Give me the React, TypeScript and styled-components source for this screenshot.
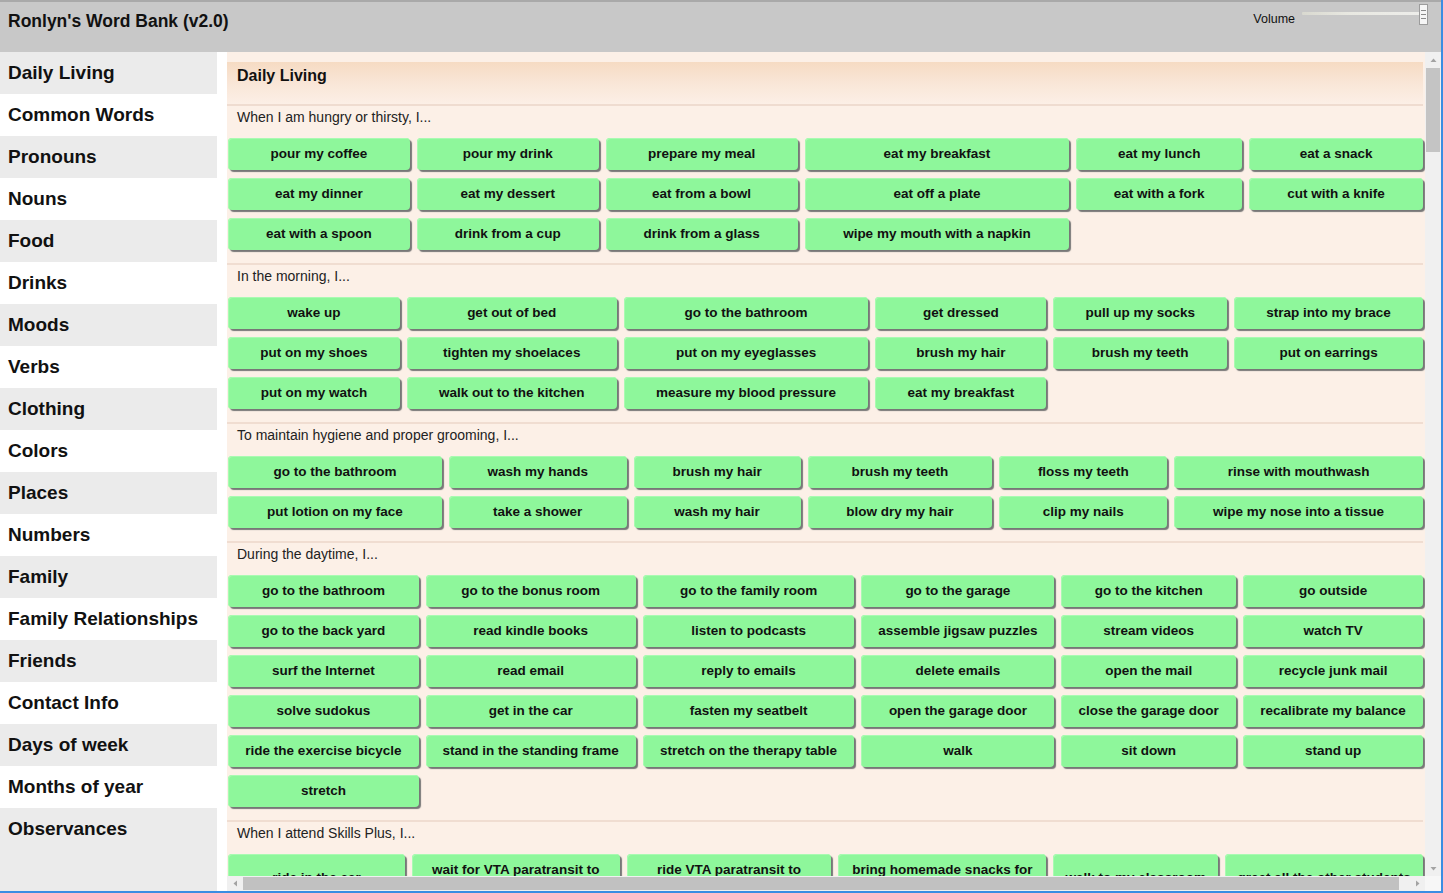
import React from 'react';
import styled, { createGlobalStyle } from 'styled-components';

const GlobalStyle = createGlobalStyle`
  html, body { margin: 0; padding: 0; background: #ffffff; }
  body { font-family: "Liberation Sans", Arial, sans-serif; color: #111; }
  * { box-sizing: border-box; }
`;

const Frame = styled.div`
  height: 100vh;
  display: flex;
  flex-direction: column;
  border-right: 2px solid #3b8de2;
  border-bottom: 2px solid #3b8de2;
  overflow: hidden;
`;

const TopBar = styled.header`
  flex: 0 0 52px;
  background: #c8c8c8;
  border-top: 2px solid #a9a9a9;
  display: flex;
  justify-content: space-between;
  align-items: flex-start;
  padding: 9px 13px 0 8px;
`;

const Title = styled.h1`
  margin: 0;
  font-size: 17.5px;
  line-height: 21px;
  font-weight: bold;
  color: #111;
`;

const VolumeGroup = styled.div`
  display: flex;
  align-items: flex-start;
  gap: 7px;
`;

const VolumeLabel = styled.span`
  font-size: 12.5px;
  line-height: 16px;
  color: #111;
`;

const Slider = styled.div`
  position: relative;
  width: 126px;
  height: 21px;
  margin-top: -7px;
`;

const Track = styled.div`
  width: 118px;
  height: 3px;
  margin-top: 8px;
  background: linear-gradient(to right, #d9d9d0, #e8e8e1 40%, #ededea);
  border-radius: 1px;
`;

const Thumb = styled.div`
  position: absolute;
  top: 0;
  right: 0;
  width: 9px;
  height: 21px;
  background: #f6f6f6;
  border: 1px solid #9c9c9c;
  display: flex;
  flex-direction: column;
  justify-content: center;
  gap: 3px;
  padding: 0 1px;
`;

const Grip = styled.span`
  display: block;
  height: 1px;
  background: #8a8a8a;
`;

const Body = styled.div`
  flex: 1;
  min-height: 0;
  display: flex;
  gap: 10px;
  background: #ffffff;
`;

const Sidebar = styled.nav`
  flex: 0 0 217px;
  background: #ebebeb;
  display: flex;
  flex-direction: column;
`;

const NavItem = styled.div<{ $alt: boolean }>`
  height: 42px;
  line-height: 42px;
  padding-left: 8px;
  font-size: 19px;
  font-weight: bold;
  color: #111;
  background: ${(p) => (p.$alt ? '#ffffff' : '#ebebeb')};
  white-space: nowrap;
`;

const Panel = styled.main`
  flex: 1;
  min-width: 0;
  display: grid;
  grid-template-columns: minmax(0, 1fr) 16px;
  grid-template-rows: minmax(0, 1fr) 15px;
  background: #fcf0e7;
`;

const Viewport = styled.div`
  overflow: hidden;
  min-width: 0;
  min-height: 0;
`;

const PanelInner = styled.div`
  width: calc(100% + 11px);
  padding: 10px 13px 0 0;
`;

const VScroll = styled.div`
  display: flex;
  flex-direction: column;
  background: #f0f0f0;
`;

const HScroll = styled.div`
  display: flex;
  background: #f0f0f0;
`;

const Corner = styled.div`
  background: #f7f7f7;
`;

const ArrowBox = styled.div`
  flex: 0 0 16px;
  display: flex;
  align-items: center;
  justify-content: center;
  color: #a3a3a3;
`;

const VThumb = styled.div`
  flex: 0 0 84px;
  margin: 0 1px;
  background: #c4c4c4;
`;

const VRest = styled.div`
  flex: 1;
`;

const HThumb = styled.div`
  flex: 1;
  margin: 1px 10px 1px 0;
  background: #c1c1c1;
`;

const PanelHeader = styled.div`
  height: 44px;
  padding: 4px 10px;
  font-size: 16px;
  line-height: 20px;
  font-weight: bold;
  color: #111;
  background: linear-gradient(to bottom, #f6dbc3 0%, #f9e6d7 50%, #fcefe6 100%);
  border-bottom: 2px solid #efdcd0;
`;

const Section = styled.section`
  padding: 0 0 13px 1px;
  border-bottom: 2px solid #f0ddd1;
`;

const SectionLabel = styled.div`
  height: 22px;
  line-height: 22px;
  padding-left: 9px;
  font-size: 14px;
  color: #222;
`;

const ButtonGrid = styled.div<{ $cols: string }>`
  margin-top: 10px;
  display: grid;
  grid-template-columns: ${(p) => p.$cols};
  column-gap: 7px;
  row-gap: 8px;
`;

const WordButton = styled.button`
  min-height: 32px;
  width: 100%;
  height: 100%;
  padding: 8px 6px;
  border: none;
  border-radius: 4px;
  background: #8ef79b;
  box-shadow: 2px 2px 1px #777777, inset 1px 1px 0 #a9fab2;
  font-family: "Liberation Sans", Arial, sans-serif;
  font-size: 13.5px;
  line-height: 16px;
  font-weight: bold;
  color: #111;
  text-align: center;
  cursor: pointer;
`;

type Dir = 'up' | 'down' | 'left' | 'right';
const arrowPoints: Record<Dir, string> = {
  up: '0.5,5 3.5,1.5 6.5,5',
  down: '0.5,2 3.5,5.5 6.5,2',
  left: '5,0.5 1.5,3.5 5,6.5',
  right: '2,0.5 5.5,3.5 2,6.5',
};

function Arrow({ dir }: { dir: Dir }) {
  return (
    <ArrowBox>
      <svg width="7" height="7" viewBox="0 0 7 7">
        <polygon points={arrowPoints[dir]} fill="currentColor" />
      </svg>
    </ArrowBox>
  );
}

const categories = [
  'Daily Living',
  'Common Words',
  'Pronouns',
  'Nouns',
  'Food',
  'Drinks',
  'Moods',
  'Verbs',
  'Clothing',
  'Colors',
  'Places',
  'Numbers',
  'Family',
  'Family Relationships',
  'Friends',
  'Contact Info',
  'Days of week',
  'Months of year',
  'Observances',
];

type SectionData = { label: string; cols: number[]; words: string[] };

const sections: SectionData[] = [
  {
    label: 'When I am hungry or thirsty, I...',
    cols: [182, 182, 192, 265, 166, 174],
    words: [
      'pour my coffee', 'pour my drink', 'prepare my meal', 'eat my breakfast', 'eat my lunch', 'eat a snack',
      'eat my dinner', 'eat my dessert', 'eat from a bowl', 'eat off a plate', 'eat with a fork', 'cut with a knife',
      'eat with a spoon', 'drink from a cup', 'drink from a glass', 'wipe my mouth with a napkin',
    ],
  },
  {
    label: 'In the morning, I...',
    cols: [172, 210, 245, 171, 174, 189],
    words: [
      'wake up', 'get out of bed', 'go to the bathroom', 'get dressed', 'pull up my socks', 'strap into my brace',
      'put on my shoes', 'tighten my shoelaces', 'put on my eyeglasses', 'brush my hair', 'brush my teeth', 'put on earrings',
      'put on my watch', 'walk out to the kitchen', 'measure my blood pressure', 'eat my breakfast',
    ],
  },
  {
    label: 'To maintain hygiene and proper grooming, I...',
    cols: [214, 178, 167, 185, 168, 249],
    words: [
      'go to the bathroom', 'wash my hands', 'brush my hair', 'brush my teeth', 'floss my teeth', 'rinse with mouthwash',
      'put lotion on my face', 'take a shower', 'wash my hair', 'blow dry my hair', 'clip my nails', 'wipe my nose into a tissue',
    ],
  },
  {
    label: 'During the daytime, I...',
    cols: [191, 210, 212, 193, 175, 180],
    words: [
      'go to the bathroom', 'go to the bonus room', 'go to the family room', 'go to the garage', 'go to the kitchen', 'go outside',
      'go to the back yard', 'read kindle books', 'listen to podcasts', 'assemble jigsaw puzzles', 'stream videos', 'watch TV',
      'surf the Internet', 'read email', 'reply to emails', 'delete emails', 'open the mail', 'recycle junk mail',
      'solve sudokus', 'get in the car', 'fasten my seatbelt', 'open the garage door', 'close the garage door', 'recalibrate my balance',
      'ride the exercise bicycle', 'stand in the standing frame', 'stretch on the therapy table', 'walk', 'sit down', 'stand up',
      'stretch',
    ],
  },
  {
    label: 'When I attend Skills Plus, I...',
    cols: [177, 208, 205, 208, 165, 198],
    words: [
      'ride in the car', 'wait for VTA paratransit to arrive', 'ride VTA paratransit to Skills\u00a0Plus',
      'bring homemade snacks for my classmates', 'walk to my classroom', 'greet all the other students',
      'sit at my table', 'listen to my teacher', 'do my classwork', 'eat my lunch', 'say goodbye', 'ride home',
    ],
  },
  {
    label: 'In the evening, I...',
    cols: [190, 200, 210, 200, 180, 181],
    words: [
      'eat my dinner', 'watch the news', 'talk with my family', 'take my medicine', 'take off my brace', 'put on my pajamas',
    ],
  },
];

export default function App() {
  return (
    <>
      <GlobalStyle />
      <Frame>
        <TopBar>
          <Title>Ronlyn's Word Bank (v2.0)</Title>
          <VolumeGroup>
            <VolumeLabel>Volume</VolumeLabel>
            <Slider>
              <Track />
              <Thumb>
                <Grip />
                <Grip />
                <Grip />
              </Thumb>
            </Slider>
          </VolumeGroup>
        </TopBar>
        <Body>
          <Sidebar>
            {categories.map((c, i) => (
              <NavItem key={c} $alt={i % 2 === 1}>
                {c}
              </NavItem>
            ))}
          </Sidebar>
          <Panel>
            <Viewport>
              <PanelInner>
                <PanelHeader>Daily Living</PanelHeader>
                {sections.map((s) => (
                  <Section key={s.label}>
                    <SectionLabel>{s.label}</SectionLabel>
                    <ButtonGrid $cols={s.cols.map((w) => `${w}fr`).join(' ')}>
                      {s.words.map((w, i) => (
                        <WordButton key={w + i}>{w}</WordButton>
                      ))}
                    </ButtonGrid>
                  </Section>
                ))}
              </PanelInner>
            </Viewport>
            <VScroll>
              <Arrow dir="up" />
              <VThumb />
              <VRest />
              <Arrow dir="down" />
            </VScroll>
            <HScroll>
              <Arrow dir="left" />
              <HThumb />
              <Arrow dir="right" />
            </HScroll>
            <Corner />
          </Panel>
        </Body>
      </Frame>
    </>
  );
}
